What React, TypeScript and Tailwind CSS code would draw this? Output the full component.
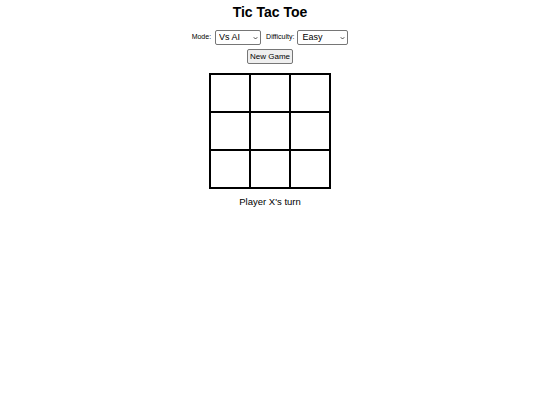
import { useState } from 'react'

type Cell = 'X' | 'O' | null

function Chevron() {
  return (
    <svg
      className="pointer-events-none absolute right-[3px] top-1/2 -translate-y-1/2 w-[5px] h-[5px]"
      viewBox="0 0 10 10"
      fill="none"
      stroke="#333"
      strokeWidth="1.8"
    >
      <path d="M1.5 3.5 L5 7 L8.5 3.5" />
    </svg>
  )
}

export default function App() {
  const [cells, setCells] = useState<Cell[]>(Array(9).fill(null))
  const [turn, setTurn] = useState<'X' | 'O'>('X')
  const [mode, setMode] = useState('ai')
  const [difficulty, setDifficulty] = useState('easy')

  function play(i: number) {
    if (cells[i]) return
    const next = [...cells]
    next[i] = turn
    setCells(next)
    setTurn(turn === 'X' ? 'O' : 'X')
  }

  function reset() {
    setCells(Array(9).fill(null))
    setTurn('X')
  }

  return (
    <div className="min-h-screen bg-white text-black font-['Liberation_Sans',Arial,sans-serif] flex flex-col items-center">
      <h1 className="text-[14px] font-bold mt-[3px] leading-[18px]">Tic Tac Toe</h1>

      {/* controls */}
      <div className="flex items-center gap-[4px] mt-[9px] text-[7px] text-black">
        <label htmlFor="mode">Mode:</label>
        <div className="relative">
          <select
            id="mode"
            value={mode}
            onChange={(e) => setMode(e.target.value)}
            className="appearance-none block w-[46px] h-[15px] border border-[#767676] rounded-[2px] bg-white text-[9px] leading-none pl-[3px] text-left"
          >
            <option value="ai">Vs AI</option>
            <option value="pvp">Vs Player</option>
          </select>
          <Chevron />
        </div>
        <label htmlFor="difficulty" className="ml-[1px] mr-[-1px]">Difficulty:</label>
        <div className="relative">
          <select
            id="difficulty"
            value={difficulty}
            onChange={(e) => setDifficulty(e.target.value)}
            className="appearance-none block w-[51px] h-[15px] border border-[#767676] rounded-[2px] bg-white text-[9px] leading-none pl-[4px] text-left"
          >
            <option value="easy">Easy</option>
            <option value="medium">Medium</option>
            <option value="hard">Hard</option>
          </select>
          <Chevron />
        </div>
      </div>

      <button
        onClick={reset}
        className="mt-[4px] h-[15px] px-[2px] border border-[#767676] rounded-[2px] bg-[#efefef] text-[8px] leading-none"
      >
        New Game
      </button>

      {/* board */}
      <div className="mt-[9px] grid grid-cols-3 gap-[2px] bg-black border-2 border-black">
        {cells.map((c, i) => (
          <button
            key={i}
            onClick={() => play(i)}
            className="w-[38px] h-[36px] bg-white text-[20px] font-bold"
          >
            {c}
          </button>
        ))}
      </div>

      <p className="mt-[6px] text-[9.5px]">Player {turn}'s turn</p>
    </div>
  )
}
